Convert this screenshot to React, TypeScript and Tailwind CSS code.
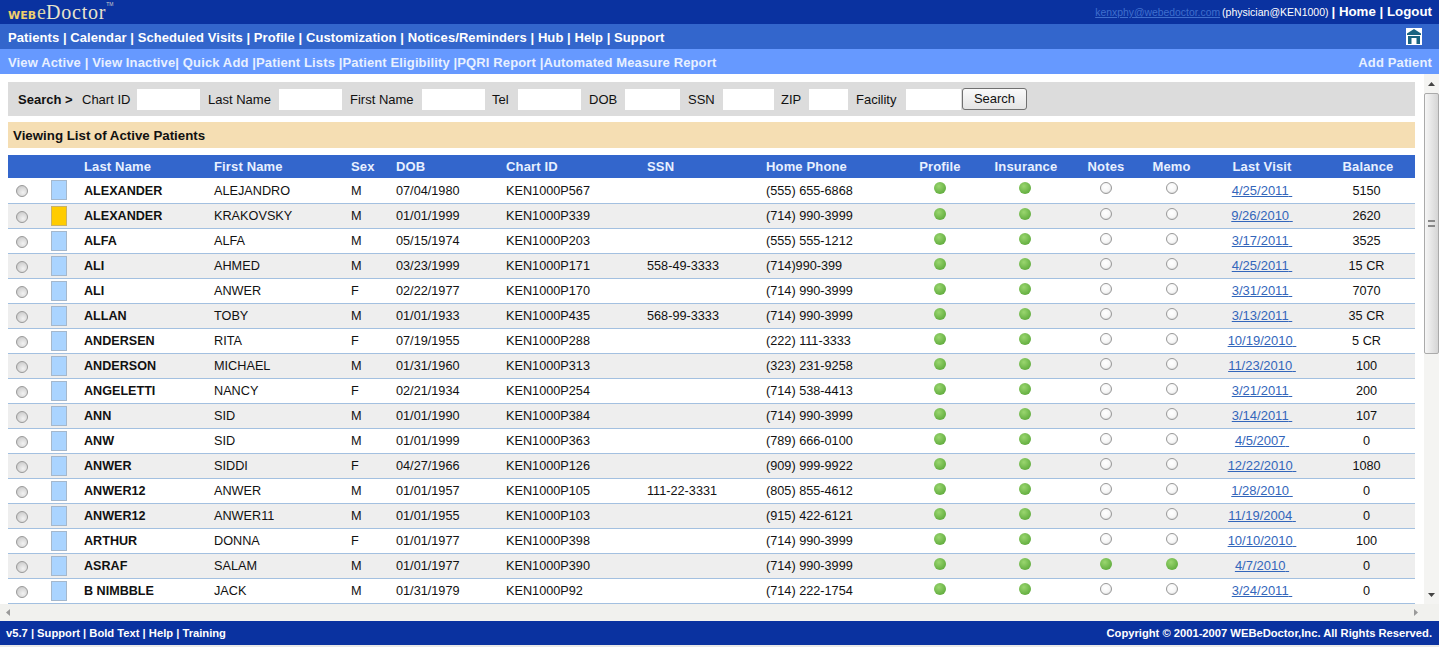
import React from "react";

type P = { l: string; f: string; s: string; d: string; c: string; ssn?: string; ph: string; v: string; b: string; gold?: boolean; on?: boolean };
const rows: P[] = [
  { l: "ALEXANDER", f: "ALEJANDRO", s: "M", d: "07/04/1980", c: "KEN1000P567", ph: "(555) 655-6868", v: "4/25/2011", b: "5150" },
  { l: "ALEXANDER", f: "KRAKOVSKY", s: "M", d: "01/01/1999", c: "KEN1000P339", ph: "(714) 990-3999", v: "9/26/2010", b: "2620", gold: true },
  { l: "ALFA", f: "ALFA", s: "M", d: "05/15/1974", c: "KEN1000P203", ph: "(555) 555-1212", v: "3/17/2011", b: "3525" },
  { l: "ALI", f: "AHMED", s: "M", d: "03/23/1999", c: "KEN1000P171", ssn: "558-49-3333", ph: "(714)990-399", v: "4/25/2011", b: "15 CR" },
  { l: "ALI", f: "ANWER", s: "F", d: "02/22/1977", c: "KEN1000P170", ph: "(714) 990-3999", v: "3/31/2011", b: "7070" },
  { l: "ALLAN", f: "TOBY", s: "M", d: "01/01/1933", c: "KEN1000P435", ssn: "568-99-3333", ph: "(714) 990-3999", v: "3/13/2011", b: "35 CR" },
  { l: "ANDERSEN", f: "RITA", s: "F", d: "07/19/1955", c: "KEN1000P288", ph: "(222) 111-3333", v: "10/19/2010", b: "5 CR" },
  { l: "ANDERSON", f: "MICHAEL", s: "M", d: "01/31/1960", c: "KEN1000P313", ph: "(323) 231-9258", v: "11/23/2010", b: "100" },
  { l: "ANGELETTI", f: "NANCY", s: "F", d: "02/21/1934", c: "KEN1000P254", ph: "(714) 538-4413", v: "3/21/2011", b: "200" },
  { l: "ANN", f: "SID", s: "M", d: "01/01/1990", c: "KEN1000P384", ph: "(714) 990-3999", v: "3/14/2011", b: "107" },
  { l: "ANW", f: "SID", s: "M", d: "01/01/1999", c: "KEN1000P363", ph: "(789) 666-0100", v: "4/5/2007", b: "0" },
  { l: "ANWER", f: "SIDDI", s: "F", d: "04/27/1966", c: "KEN1000P126", ph: "(909) 999-9922", v: "12/22/2010", b: "1080" },
  { l: "ANWER12", f: "ANWER", s: "M", d: "01/01/1957", c: "KEN1000P105", ssn: "111-22-3331", ph: "(805) 855-4612", v: "1/28/2010", b: "0" },
  { l: "ANWER12", f: "ANWER11", s: "M", d: "01/01/1955", c: "KEN1000P103", ph: "(915) 422-6121", v: "11/19/2004", b: "0" },
  { l: "ARTHUR", f: "DONNA", s: "F", d: "01/01/1977", c: "KEN1000P398", ph: "(714) 990-3999", v: "10/10/2010", b: "100" },
  { l: "ASRAF", f: "SALAM", s: "M", d: "01/01/1977", c: "KEN1000P390", ph: "(714) 990-3999", v: "4/7/2010", b: "0", on: true },
  { l: "B NIMBBLE", f: "JACK", s: "M", d: "01/31/1979", c: "KEN1000P92", ph: "(714) 222-1754", v: "3/24/2011", b: "0" },
];

const Dot = ({ on }: { on: boolean }) => (
  <span
    className={
      on
        ? "block mx-auto mb-[4px] w-[12px] h-[12px] rounded-full bg-[radial-gradient(circle_at_40%_35%,#9ad66f,#62ad3f_75%,#4d8f33)]"
        : "block mx-auto mb-[4px] w-[12px] h-[12px] rounded-full border border-[#999] bg-[radial-gradient(circle_at_45%_40%,#ffffff,#f6f6f6_55%,#bdbdbd)]"
    }
  />
);

const Field = ({ label, lw, w, gap }: { label: string; lw: string; w: string; gap: string }) => (
  <>
    <span className={lw + " shrink-0 mt-[2px] text-[13px]"}>{label}</span>
    <span className={w + " " + gap + " shrink-0 h-[21px] bg-white block"} />
  </>
);

export default function App() {
  return (
    <div className="w-[1439px] h-[647px] overflow-hidden bg-white flex flex-col font-['Liberation_Sans',Arial,sans-serif] text-[12.7px] text-[#111]">
      <div className="h-[24px] shrink-0 bg-[#0a32a0] flex items-center justify-between pl-2 pr-[7px]">
        <div className="flex items-baseline leading-none">
          <span className="text-[11px] font-bold text-[#f0cf6c] font-['DejaVu_Sans',sans-serif]">WEB</span>
          <span className="text-[20px] ml-px text-[#d9d2a8] font-['Liberation_Serif',serif]">e</span>
          <span className="text-[20px] text-[#e8e4cc] tracking-[0.8px] font-['Liberation_Serif',serif]">Doctor</span>
          <span className="text-[5px] text-[#ccc] self-start">TM</span>
        </div>
        <div className="flex items-baseline text-white">
          <a className="text-[10.4px] text-[#3f6fce] underline">kenxphy@webedoctor.com</a>
          <span className="text-[10.5px] ml-[2px]">(physician@KEN1000)</span>
          <span className="text-[13.3px] font-bold ml-[3px]">| Home | Logout</span>
        </div>
      </div>
      <div className="h-[25px] shrink-0 bg-[#3366cc] flex items-center justify-between pl-2 pr-[17px] text-white font-bold text-[13px] tracking-[0.08px]">
        <span className="pt-[2px]">Patients | Calendar | Scheduled Visits | Profile | Customization | Notices/Reminders | Hub | Help | Support</span>
        <svg width="16" height="17" viewBox="0 0 16 17">
          <rect width="16" height="17" fill="#fff" />
          <path d="M8 1 L15 5.5 V7 H1 V5.5 Z" fill="#1a6480" />
          <path d="M2 8 H14 V16 H10.5 V10 H5.5 V16 H2 Z" fill="#1a6480" />
        </svg>
      </div>
      <div className="h-[25px] shrink-0 bg-[#6699ff] flex items-center justify-between pl-2 pr-[7px] text-[#e8f0ff] font-bold text-[13px] tracking-[0.13px]">
        <span className="pt-[2px]">View Active | View Inactive| Quick Add |Patient Lists |Patient Eligibility |PQRI Report |Automated Measure Report</span>
        <span className="pt-[2px]">Add Patient</span>
      </div>

      <div className="flex-1 min-h-0 flex">
        <div className="w-[1424px] shrink-0 pl-2 pr-[9px] pt-2 overflow-hidden">
          <div className="h-[34px] bg-[#dcdcdc] flex items-center pl-[10px]">
            <b className="w-[64px] shrink-0 mt-[2px] text-[13px]">Search &gt;</b>
            <Field label="Chart ID" lw="w-[55px]" w="w-[63px]" gap="mr-2" />
            <Field label="Last Name" lw="w-[71px]" w="w-[63px]" gap="mr-2" />
            <Field label="First Name" lw="w-[72px]" w="w-[63px]" gap="mr-[7px]" />
            <Field label="Tel" lw="w-[26px]" w="w-[63px]" gap="mr-2" />
            <Field label="DOB" lw="w-[36px]" w="w-[55px]" gap="mr-2" />
            <Field label="SSN" lw="w-[35px]" w="w-[51px]" gap="mr-[7px]" />
            <Field label="ZIP" lw="w-[28px]" w="w-[39px]" gap="mr-2" />
            <Field label="Facility" lw="w-[50px]" w="w-[55px]" gap="mr-px" />
            <button className="w-[65px] h-[22px] rounded-[3px] border border-[#707070] bg-[linear-gradient(#fafafa,#e4e4e4)] text-[13px]">Search</button>
          </div>
          <div className="h-[26px] mt-[6px] bg-[#f5deb3] flex items-center pl-[5px] pt-[2px] font-bold text-[13.3px]">Viewing List of Active Patients</div>
          <table className="mt-[7px] w-full table-fixed border-collapse">
            <colgroup>
              <col className="w-[41px]" /><col className="w-[32px]" /><col className="w-[130px]" /><col className="w-[137px]" />
              <col className="w-[45px]" /><col className="w-[110px]" /><col className="w-[141px]" /><col className="w-[119px]" />
              <col className="w-[135px]" /><col className="w-[84px]" /><col className="w-[86px]" /><col className="w-[76px]" />
              <col className="w-[56px]" /><col className="w-[124px]" /><col className="w-[91px]" />
            </colgroup>
            <thead>
              <tr className="h-[23px] bg-[#3366cc] text-[#e8f0ff] font-bold text-[13px] tracking-[0.15px]">
                <th />
                <th />
                <th className="text-left pl-[3px]">Last Name</th>
                <th className="text-left pl-[3px]">First Name</th>
                <th className="text-left pl-[3px]">Sex</th>
                <th className="text-left pl-[3px]">DOB</th>
                <th className="text-left pl-[3px]">Chart ID</th>
                <th className="text-left pl-[3px]">SSN</th>
                <th className="text-left pl-[3px]">Home Phone</th>
                <th>Profile</th>
                <th className="pl-[2px]">Insurance</th>
                <th>Notes</th>
                <th className="pr-px">Memo</th>
                <th>Last Visit</th>
                <th className="pr-[3px]">Balance</th>
              </tr>
            </thead>
            <tbody>
              {rows.map((r, i) => (
                <tr key={i} className={(i % 2 ? "bg-[#eeeeee]" : "bg-white") + " h-[25px] border-b border-[#a3c0e0]"}>
                  <td className="p-0 pl-2">
                    <span className="block w-[12px] h-[12px] mt-[2px] rounded-full border border-[#9a9a9a] bg-[radial-gradient(circle_at_60%_65%,#f2f2f2,#cfcfcf_70%,#b5b5b5)]" />
                  </td>
                  <td className="p-0">
                    <div className={(r.gold ? "bg-[#ffcc00] border-[#c8b26a]" : "bg-[#aad4ff] border-[#a5b8cc]") + " ml-[2px] w-[16px] h-[20px] border"} />
                  </td>
                  <td className="pl-[3px] pt-[2px] font-bold text-[12.6px]">{r.l}</td>
                  <td className="pl-[3px] pt-[2px]">{r.f}</td>
                  <td className="pl-[3px] pt-[2px]">{r.s}</td>
                  <td className="pl-[3px] pt-[2px]">{r.d}</td>
                  <td className="pl-[3px] pt-[2px]">{r.c}</td>
                  <td className="pl-[3px] pt-[2px]">{r.ssn}</td>
                  <td className="pl-[3px] pt-[2px]">{r.ph}</td>
                  <td className="p-0"><Dot on /></td>
                  <td className="p-0"><Dot on /></td>
                  <td className="p-0"><Dot on={!!r.on} /></td>
                  <td className="p-0"><Dot on={!!r.on} /></td>
                  <td className="text-center pt-[2px]"><a className="text-[#3366bb] underline whitespace-pre text-[13px]">{r.v} </a></td>
                  <td className="text-center pr-[6px] pt-[2px]">{r.b}</td>
                </tr>
              ))}
            </tbody>
          </table>
        </div>
        <div className="w-[15px] shrink-0 bg-[#f4f4f2] flex flex-col items-center">
          <div className="h-[19px] flex items-center">
            <svg width="7" height="4" viewBox="0 0 7 4"><path d="M3.5 0 L7 4 H0 Z" fill="#444" /></svg>
          </div>
          <div className="w-[15px] h-[261px] rounded-[2px] border border-[#aaa] bg-[linear-gradient(90deg,#f6f6f6,#d5d5d5)] flex items-center justify-center">
            <div className="w-[7px] h-[7px] border-y-2 border-double border-[#888]" />
          </div>
          <div className="flex-1" />
          <div className="h-[19px] flex items-center">
            <svg width="7" height="4" viewBox="0 0 7 4"><path d="M3.5 4 L7 0 H0 Z" fill="#444" /></svg>
          </div>
        </div>
      </div>

      <div className="h-[17px] shrink-0 bg-[#f1f1ee] flex items-center justify-between pl-[6px] pr-[21px]">
        <svg width="4" height="7" viewBox="0 0 4 7"><path d="M0 3.5 L4 0 V7 Z" fill="#9a9a9a" /></svg>
        <svg width="4" height="7" viewBox="0 0 4 7"><path d="M4 3.5 L0 0 V7 Z" fill="#9a9a9a" /></svg>
      </div>
      <div className="h-[24px] shrink-0 bg-[#0a32a0] flex items-center justify-between pl-[6px] pr-[7px] pt-px text-white font-bold text-[11.2px]">
        <span>v5.7 | Support | Bold Text | Help | Training</span>
        <span>Copyright © 2001-2007 WEBeDoctor,Inc. All Rights Reserved.</span>
      </div>
      <div className="h-[2px] shrink-0 bg-[#e8e8e8]" />
    </div>
  );
}
